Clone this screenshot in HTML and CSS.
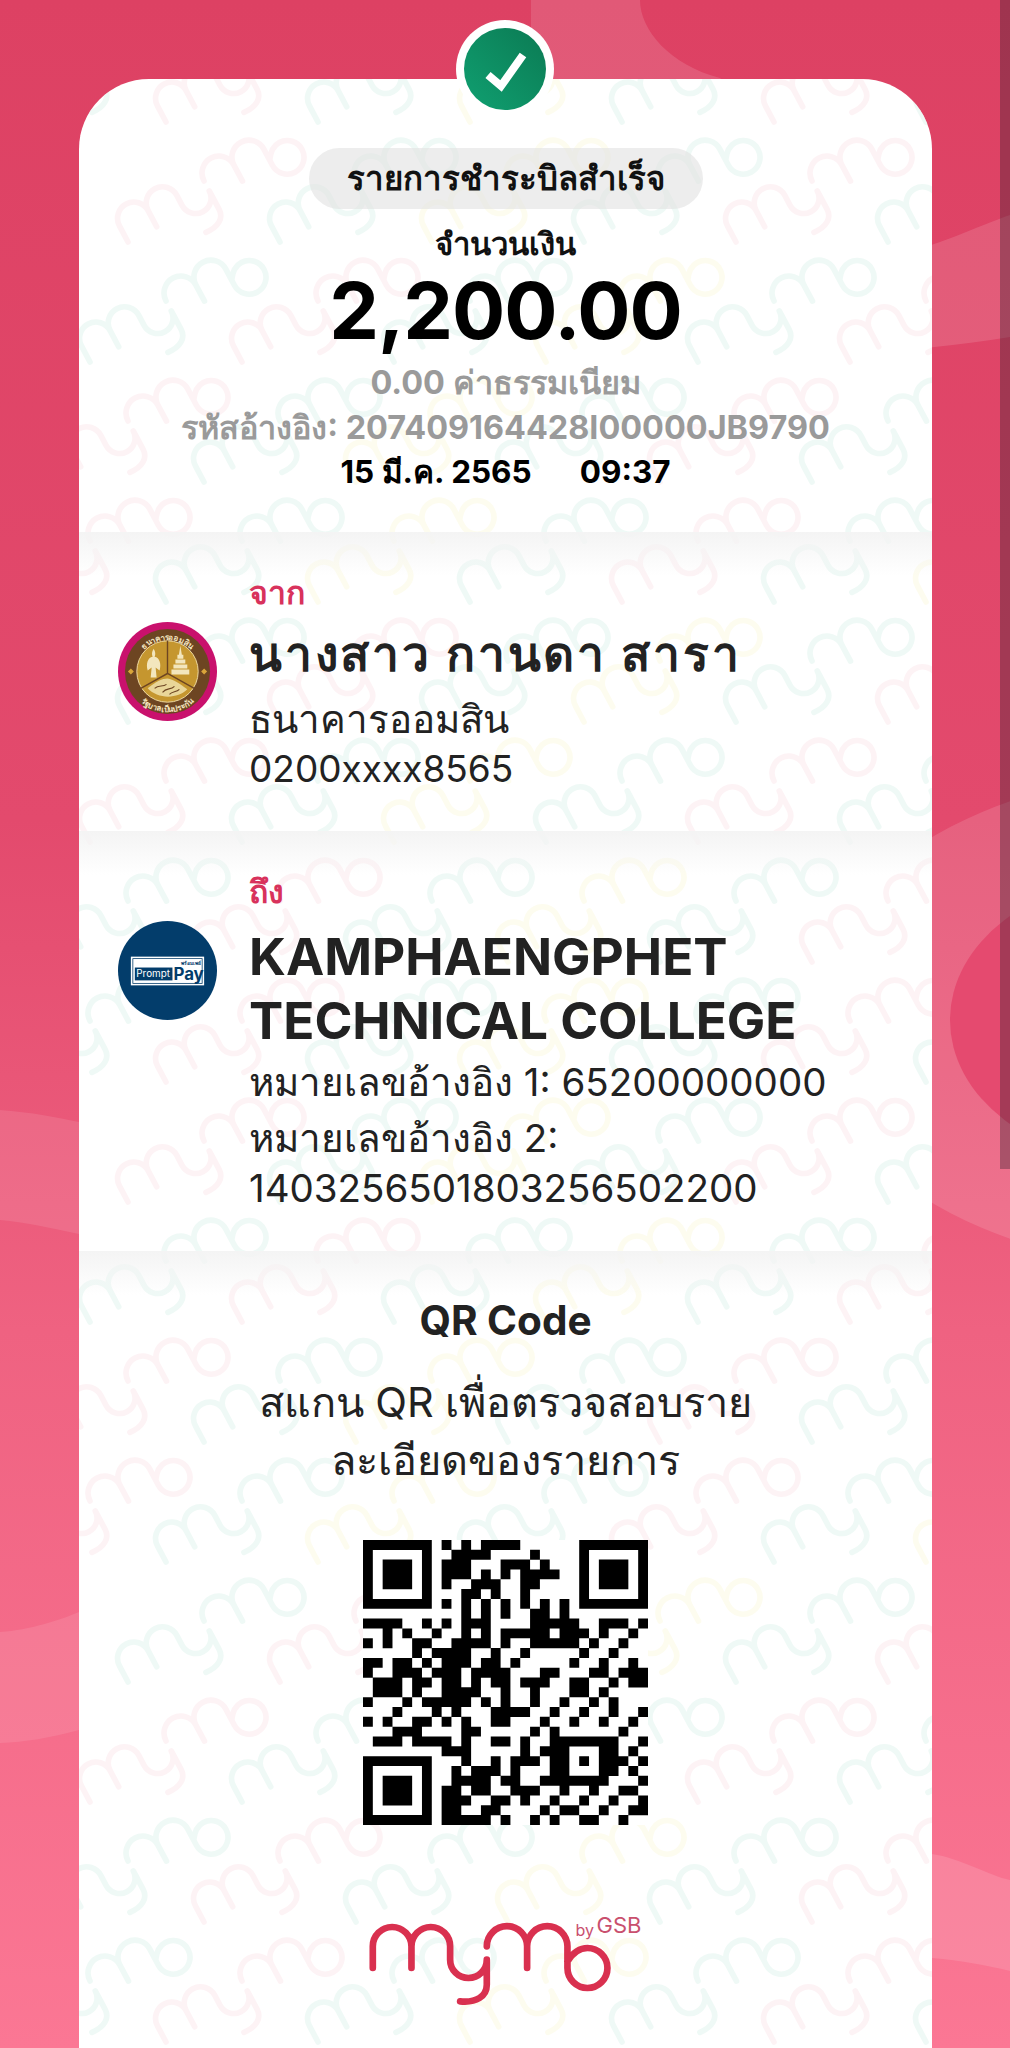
FILE: index.html
```html
<!DOCTYPE html>
<html lang="th">

<head>
    <meta charset="UTF-8">
    <meta name="viewport" content="width=device-width, initial-scale=1.0">
    <title>รายการชำระบิลสำเร็จ</title>
    <link rel="stylesheet" href="styles.css">
</head>

<body>
    <svg class="defs" width="0" height="0">
        <defs>
            <path id="mymo" fill="none" stroke-width="20" stroke-linecap="round" stroke-linejoin="round"
                d="M0 0V-65a58 58 0 0 1 116 0V0M116 -65a58 58 0 0 1 116 0V-25a55 55 0 0 0 110 0V50C342 85 310 105 262 100M342 -65a58 58 0 0 1 121 0V0M463 -65a58 58 0 0 1 121 0V0a60 60 0 1 0 60 -60C620 -60 600 -45 584 -20" />
            <g id="mark" transform="rotate(-28) scale(.28)">
                <use href="#mymo" />
            </g>
            <g id="rowA">
                <use href="#mark" x="-152" stroke="#e2f5ef" />
                <use href="#mark" x="0" stroke="#fdeaee" />
                <use href="#mark" x="152" stroke="#e2f5ef" />
                <use href="#mark" x="304" stroke="#fdfbe3" />
                <use href="#mark" x="456" stroke="#e2f5ef" />
                <use href="#mark" x="608" stroke="#fdeaee" />
                <use href="#mark" x="760" stroke="#e2f5ef" />
                <use href="#mark" x="912" stroke="#fdfbe3" />
            </g>
            <g id="rowB">
                <use href="#mark" x="-152" stroke="#fdeaee" />
                <use href="#mark" x="0" stroke="#e2f5ef" />
                <use href="#mark" x="152" stroke="#fdfbe3" />
                <use href="#mark" x="304" stroke="#e2f5ef" />
                <use href="#mark" x="456" stroke="#fdeaee" />
                <use href="#mark" x="608" stroke="#e2f5ef" />
                <use href="#mark" x="760" stroke="#fdfbe3" />
                <use href="#mark" x="912" stroke="#e2f5ef" />
            </g>
        </defs>
    </svg>

    <div class="page">
        <svg class="bg-shapes" viewBox="0 0 1010 2048" width="1010" height="2048">
            <path d="M531 0H640C640 30 670 65 720 78L900 252C930 250 980 225 1010 215V337C960 345 900 352 850 352L531 100Z" fill="#fff" fill-opacity=".13" />
            <ellipse cx="1200" cy="1020" rx="393" ry="250" fill="#fff" fill-opacity=".13" />
            <ellipse cx="1135" cy="1020" rx="185" ry="141" fill="#e54a6f" />
            <path d="M0 1110C30 1112 60 1118 79 1122H300V1234H79C50 1228 25 1222 0 1220Z" fill="#fff" fill-opacity=".1" />
            <path d="M0 1632C30 1630 60 1620 79 1612H300V1730H79C50 1738 25 1742 0 1743Z" fill="#fff" fill-opacity=".1" />
            <path d="M800 1854H932C960 1858 990 1876 1010 1880V1971C990 1966 960 1960 932 1958H800Z" fill="#fff" fill-opacity=".13" />
        </svg>

        <main class="card">
            <div class="watermark">
                <svg viewBox="0 0 853 1969" width="853" height="1969">
                    <use href="#rowA" transform="translate(87 43)" />
                    <use href="#rowB" transform="translate(201 163)" />
                    <use href="#rowA" transform="translate(163 283)" />
                    <use href="#rowB" transform="translate(125 403)" />
                    <use href="#rowB" transform="translate(87 523)" />
                    <use href="#rowA" transform="translate(201 643)" />
                    <use href="#rowB" transform="translate(163 763)" />
                    <use href="#rowA" transform="translate(125 883)" />
                    <use href="#rowA" transform="translate(87 1003)" />
                    <use href="#rowB" transform="translate(201 1123)" />
                    <use href="#rowA" transform="translate(163 1243)" />
                    <use href="#rowB" transform="translate(125 1363)" />
                    <use href="#rowB" transform="translate(87 1483)" />
                    <use href="#rowA" transform="translate(201 1603)" />
                    <use href="#rowB" transform="translate(163 1723)" />
                    <use href="#rowA" transform="translate(125 1843)" />
                    <use href="#rowA" transform="translate(87 1963)" />
                </svg>
            </div>

            <div class="badge">
                <svg viewBox="0 0 82 82" width="82" height="82">
                    <defs>
                        <linearGradient id="badgeFill" x1="0" y1="1" x2="1" y2="0">
                            <stop offset="0" stop-color="#10a071" />
                            <stop offset="1" stop-color="#0b7a53" />
                        </linearGradient>
                    </defs>
                    <circle cx="41" cy="41" r="41" fill="url(#badgeFill)" />
                    <path d="M24 47L37 58L59 27" fill="none" stroke="#fff" stroke-width="8" />
                </svg>
            </div>

            <section class="summary">
                <div class="status-pill">รายการชำระบิลสำเร็จ</div>
                <div class="amount-label">จำนวนเงิน</div>
                <div class="amount">2,200.00</div>
                <div class="muted fee">0.00 ค่าธรรมเนียม</div>
                <div class="muted ref">รหัสอ้างอิง: 207409164428I00000JB9790</div>
                <div class="datetime"><span>15 มี.ค. 2565</span><span>09:37</span></div>
            </section>

            <section class="party party-from">
                <svg class="party-logo" viewBox="0 0 100 100" width="99" height="99">
                    <defs>
                        <path id="gsbTop" d="M18 50a32 32 0 0 1 64 0" />
                        <path id="gsbBottom" d="M9 50a41 41 0 0 0 82 0" />
                    </defs>
                    <circle cx="50" cy="50" r="50" fill="#c9116d" />
                    <circle cx="50" cy="50" r="43" fill="#6d4522" />
                    <circle cx="50" cy="50" r="31" fill="#c5962f" />
                    <circle cx="50" cy="50" r="31" fill="none" stroke="#eed9a0" stroke-width="1" />
                    <path d="M50 19V52L23 67M50 52L77 67" fill="none" stroke="#6d4522" stroke-width="1.4" />
                    <path d="M63 24L64.5 33H61.5ZM60 33H66V37H60ZM58 38H68V42H58ZM56 43H70V47H56ZM54 48H72V53H54Z" fill="#f3e6bd" />
                    <path d="M36 27C38 30 38 33 37 35C42 36 44 42 42 49L38 46L39 56H33L34 46L30 49C28 42 30 36 35 35C34 33 34 30 36 27Z" fill="#f3e6bd" />
                    <path d="M30 67C38 60 45 57 50 57C56 58 62 62 70 68C60 78 40 78 30 67Z" fill="#e9d699" />
                    <path d="M37 67C41 63 45 66 49 63M45 71C49 66 53 69 57 65M52 73C55 70 59 71 62 68" fill="none" stroke="#6d4522" stroke-width="1.1" />
                    <path d="M10 50l3 -3l3 3l-3 3zM84 50l3 -3l3 3l-3 3z" fill="#d9a53a" />
                    <text class="gsb-ring"><textPath href="#gsbTop" startOffset="50%">ธนาคารออมสิน</textPath></text>
                    <text class="gsb-ring"><textPath href="#gsbBottom" startOffset="50%">รัฐบาลเป็นประกัน</textPath></text>
                </svg>
                <div class="party-info">
                    <div class="party-label">จาก</div>
                    <div class="party-name party-name-th">นางสาว กานดา สารา</div>
                    <div class="party-line">ธนาคารออมสิน</div>
                    <div class="party-line party-account">0200xxxx8565</div>
                </div>
            </section>

            <section class="party party-to">
                <svg class="party-logo" viewBox="0 0 100 100" width="99" height="99">
                    <circle cx="50" cy="50" r="50" fill="#033d6b" />
                    <rect x="13" y="36" width="74" height="29" fill="#fff" />
                    <rect x="15" y="38" width="70" height="25" fill="none" stroke="#033d6b" stroke-width=".8" />
                    <rect x="17" y="47" width="38" height="13" fill="#033d6b" />
                    <text class="pp-small" x="84" y="44">พร้อมเพย์</text>
                    <text class="pp-prompt" x="18.5" y="57">Prompt</text>
                    <text class="pp-pay" x="56" y="59.5">Pay</text>
                </svg>
                <div class="party-info">
                    <div class="party-label">ถึง</div>
                    <div class="party-name party-name-en">KAMPHAENGPHET<br>TECHNICAL COLLEGE</div>
                    <div class="party-line party-line-first">หมายเลขอ้างอิง 1: 65200000000</div>
                    <div class="party-line">หมายเลขอ้างอิง 2:</div>
                    <div class="party-line">1403256501803256502200</div>
                </div>
            </section>

            <section class="qr-section">
                <h2 class="qr-title">QR Code</h2>
                <p class="qr-text">สแกน QR เพื่อตรวจสอบราย<br>ละเอียดของรายการ</p>
                <svg class="qr" viewBox="0 0 29 29" width="285" height="285">
                    <rect width="29" height="29" fill="#fff" />
                    <path fill="none" stroke="#000" stroke-width="1.01" d="
                    M0 .5h7M8 .5h1M10 .5h1M12 .5h4M22 .5h7
                    M0 1.5h1M6 1.5h1M9 1.5h4M17 1.5h1M22 1.5h1M28 1.5h1
                    M0 2.5h1M2 2.5h3M6 2.5h1M8 2.5h3M14 2.5h3M18 2.5h1M22 2.5h1M24 2.5h3M28 2.5h1
                    M0 3.5h1M2 3.5h3M6 3.5h1M8 3.5h3M12 3.5h1M14 3.5h1M16 3.5h4M22 3.5h1M24 3.5h3M28 3.5h1
                    M0 4.5h1M2 4.5h3M6 4.5h1M8 4.5h1M11 4.5h3M16 4.5h2M22 4.5h1M24 4.5h3M28 4.5h1
                    M0 5.5h1M6 5.5h1M10 5.5h2M13 5.5h1M16 5.5h1M22 5.5h1M28 5.5h1
                    M0 6.5h7M8 6.5h1M10 6.5h1M12 6.5h1M14 6.5h1M16 6.5h1M18 6.5h1M20 6.5h1M22 6.5h7
                    M10 7.5h1M12 7.5h1M14 7.5h1M17 7.5h2M20 7.5h1
                    M0 8.5h4M6 8.5h1M8 8.5h1M10 8.5h3M17 8.5h5M24 8.5h3M28 8.5h1
                    M2 9.5h1M4 9.5h1M7 9.5h1M10 9.5h1M12 9.5h1M14 9.5h5M20 9.5h3M24 9.5h1M27 9.5h1
                    M0 10.5h1M2 10.5h1M5 10.5h2M9 10.5h4M14 10.5h1M17 10.5h5M23 10.5h1M26 10.5h1
                    M5 11.5h1M7 11.5h4M13 11.5h1M16 11.5h1M22 11.5h1M25 11.5h1
                    M0 12.5h2M3 12.5h2M6 12.5h1M8 12.5h3M12 12.5h2M15 12.5h1M21 12.5h1M24 12.5h1M27 12.5h1
                    M0 13.5h1M3 13.5h3M7 13.5h3M11 13.5h4M18 13.5h2M23 13.5h2M26 13.5h3
                    M1 14.5h3M5 14.5h2M8 14.5h2M11 14.5h1M13 14.5h2M16 14.5h3M21 14.5h2M25 14.5h1M27 14.5h2
                    M1 15.5h3M5 15.5h1M8 15.5h3M11 15.5h1M14 15.5h1M17 15.5h1M21 15.5h2M24 15.5h1
                    M0 16.5h1M4 16.5h1M6 16.5h5M12 16.5h1M14 16.5h1M17 16.5h1M20 16.5h1M23 16.5h1M25 16.5h1
                    M3 17.5h1M7 17.5h1M9 17.5h1M13 17.5h4M19 17.5h1M22 17.5h1M25 17.5h1M28 17.5h1
                    M0 18.5h1M2 18.5h1M5 18.5h2M8 18.5h1M10 18.5h1M13 18.5h2M18 18.5h1M21 18.5h1M24 18.5h1M27 18.5h1
                    M3 19.5h3M10 19.5h2M17 19.5h1M19 19.5h1M26 19.5h1
                    M1 20.5h3M5 20.5h4M10 20.5h1M13 20.5h2M16 20.5h1M19 20.5h7M28 20.5h1
                    M8 21.5h3M16 21.5h1M18 21.5h3M24 21.5h2M27 21.5h1
                    M0 22.5h7M10 22.5h1M13 22.5h1M15 22.5h3M19 22.5h2M22 22.5h1M24 22.5h2M26 22.5h1M28 22.5h1
                    M0 23.5h1M6 23.5h1M9 23.5h1M11 23.5h3M15 23.5h1M19 23.5h2M24 23.5h2M27 23.5h1
                    M0 24.5h1M2 24.5h3M6 24.5h1M9 24.5h4M14 24.5h2M18 24.5h7M28 24.5h1
                    M0 25.5h1M2 25.5h3M6 25.5h1M8 25.5h2M11 25.5h2M15 25.5h3M20 25.5h1M23 25.5h1M26 25.5h2
                    M0 26.5h1M2 26.5h3M6 26.5h1M8 26.5h3M13 26.5h2M16 26.5h1M19 26.5h1M22 26.5h1M25 26.5h1M28 26.5h1
                    M0 27.5h1M6 27.5h1M8 27.5h2M12 27.5h2M18 27.5h1M20 27.5h2M24 27.5h1M27 27.5h2
                    M0 28.5h7M8 28.5h5M14 28.5h1M17 28.5h1M19 28.5h1M22 28.5h2M26 28.5h1" />
                </svg>
                <svg class="brand" viewBox="0 0 280 100" width="280" height="100">
                    <use href="#mymo" transform="translate(6.8 60) scale(.3333)" stroke="#d9304f" />
                    <text class="brand-by" x="209.5" y="28">by</text>
                    <text class="brand-gsb" x="230.5" y="25">GSB</text>
                </svg>
            </section>
        </main>

        <div class="scroll-thumb"></div>
    </div>
</body>

</html>
```

FILE: styles.css
```css
* {
    box-sizing: border-box;
}

body {
    margin: 0;
    font-family: Inter, "Noto Sans", sans-serif;
    color: #222;
}

.defs {
    position: absolute;
}

.page {
    position: relative;
    width: 1010px;
    height: 2048px;
    padding: 79px 78px 0 79px;
    overflow: hidden;
    background: linear-gradient(#dd4163, #e34a6d 40%, #ef6281 65%, #fb7794);
}

.bg-shapes {
    position: absolute;
    top: 0;
    left: 0;
}

.scroll-thumb {
    position: absolute;
    top: 0;
    right: 0;
    width: 10px;
    height: 1169px;
    background: rgba(50, 30, 45, 0.36);
}

.card {
    position: relative;
    height: 1969px;
    background: white;
    border-radius: 70px 70px 0 0;
}

.watermark {
    position: absolute;
    inset: 0;
    overflow: hidden;
    border-radius: 70px 70px 0 0;
    opacity: 0.55;
}

.watermark svg {
    display: block;
}

.badge {
    position: absolute;
    top: -59px;
    left: 377px;
    width: 98px;
    height: 98px;
    padding: 8px;
    border-radius: 50%;
    background: white;
}

.badge svg {
    display: block;
}

.summary {
    position: relative;
    height: 453px;
    padding-top: 69px;
    display: flex;
    flex-direction: column;
    align-items: center;
}

.status-pill {
    width: 394px;
    height: 61px;
    border-radius: 31px;
    background: rgba(225, 225, 225, 0.6);
    font-size: 33px;
    font-weight: 700;
    line-height: 61px;
    text-align: center;
    color: #111;
}

.amount-label {
    margin-top: 16px;
    font-size: 31px;
    font-weight: 700;
    line-height: 38px;
    color: #111;
}

.amount {
    margin-top: 6px;
    font-size: 79px;
    font-weight: 700;
    letter-spacing: -1px;
    line-height: 82px;
    color: #000;
}

.muted {
    font-size: 32.4px;
    font-weight: 700;
    color: #9a9a9a;
}

.fee {
    margin-top: 11px;
    line-height: 42px;
}

.ref {
    margin-top: 3px;
    line-height: 42px;
}

.datetime {
    margin-top: 2px;
    display: flex;
    gap: 48px;
    font-size: 31.5px;
    font-weight: 700;
    line-height: 42px;
    color: #000;
}

.party {
    position: relative;
    display: flex;
    gap: 32px;
    padding: 42px 0 0 39px;
    background: linear-gradient(#f4f4f4, rgba(244, 244, 244, 0) 44px);
}

.party-from {
    height: 299px;
}

.party-to {
    height: 420px;
}

.party-logo {
    flex: none;
    margin-top: 48px;
}

.party-label {
    font-size: 32px;
    font-weight: 700;
    line-height: 38px;
    color: #d8325c;
}

.party-name {
    font-weight: 700;
}

.party-name-th {
    margin: 12px 0 10px;
    font-size: 48px;
    letter-spacing: 2.8px;
    line-height: 60px;
}

.party-name-en {
    margin: 13px 0 5px;
    font-size: 51.3px;
    line-height: 64px;
}

.party-line {
    font-size: 38.5px;
    line-height: 50px;
}

.party-line-first {
    margin-bottom: 6px;
}

.party-account {
    font-size: 37px;
}

.gsb-ring {
    font-size: 8px;
    font-weight: 700;
    fill: #f5e6c0;
    text-anchor: middle;
}

.pp-small {
    font-size: 5px;
    font-weight: 700;
    fill: #033d6b;
    text-anchor: end;
}

.pp-prompt {
    font-size: 10px;
    fill: #fff;
}

.pp-pay {
    font-size: 17px;
    font-weight: 700;
    fill: #033d6b;
}

.qr-section {
    position: relative;
    display: flex;
    flex-direction: column;
    align-items: center;
    padding-top: 44px;
    background: linear-gradient(#f4f4f4, rgba(244, 244, 244, 0) 44px);
}

.qr-title {
    margin: 0;
    font-size: 40.5px;
    font-weight: 700;
    line-height: 52px;
}

.qr-text {
    margin: 26px 0 0;
    font-size: 41.5px;
    line-height: 58px;
    text-align: center;
}

.qr {
    margin-top: 51px;
    display: block;
}

.brand {
    margin-top: 83px;
    display: block;
}

.brand-by {
    font-size: 16px;
    fill: #c9506e;
}

.brand-gsb {
    font-size: 22px;
    fill: #c9506e;
}
```
